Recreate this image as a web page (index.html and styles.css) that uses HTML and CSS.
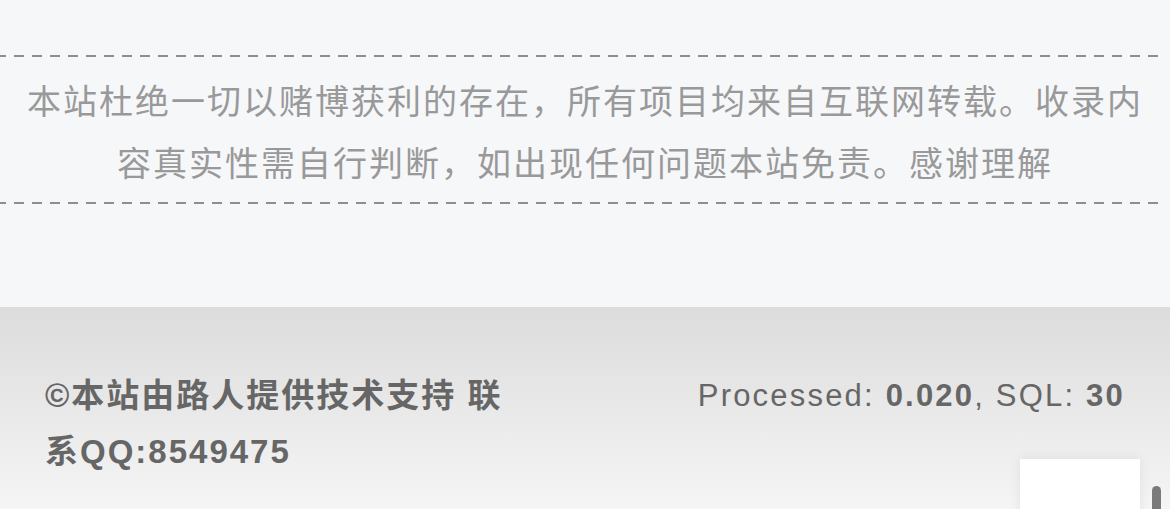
FILE: index.html
```html
<!DOCTYPE html>
<html lang="zh-CN">
<head>
  <meta charset="UTF-8" />
  <meta name="viewport" content="width=device-width, initial-scale=1.0"/>
  <title>Footer</title>
  <link rel="stylesheet" href="styles.css">
</head>
<body>

<div class="notice">
  <p>本站杜绝一切以赌博获利的存在，所有项目均来自互联网转载。收录内容真实性需自行判断，如出现任何问题本站免责。感谢理解</p>
</div>

<footer class="footer">
  <div class="footer-left">©本站由路人提供技术支持 联系QQ:8549475</div>
  <div class="footer-right">Processed: <b>0.020</b>, SQL: <b>30</b></div>
</footer>

<div class="back-top"></div>
<div class="scroll-thumb"></div>

</body>
</html>
```

FILE: styles.css
```css
body {
  margin: 0;
  background: #f6f7f9;
  font-family: "Liberation Sans", "Noto Sans CJK SC", sans-serif;
}

.notice {
  margin-top: 55px;
  margin-bottom: 103px;
  padding: 2px 24px;
  background-image:
    repeating-linear-gradient(to right, #8e8e8e 0 10px, transparent 10px 18px),
    repeating-linear-gradient(to right, #8e8e8e 0 10px, transparent 10px 18px);
  background-size: 100% 2px, 100% 2px;
  background-position: -4px 0, -4px 100%;
  background-repeat: no-repeat;
}

.notice p {
  margin: 0;
  padding: 14px 0 7px;
  text-align: center;
  font-size: 34px;
  line-height: 62px;
  letter-spacing: 2px;
  color: #999;
}

.footer {
  display: flex;
  align-items: flex-start;
  justify-content: space-between;
  padding: 61px 45px 60px 45px;
  background: linear-gradient(to bottom, #dcdcdc, #f9f9f9);
  color: #666;
  line-height: 56px;
}

.footer-left {
  width: 480px;
  font-size: 33px;
  font-weight: 700;
  letter-spacing: 2px;
}

.footer-right {
  font-size: 31px;
  letter-spacing: 2.2px;
  text-align: right;
}

.footer-right b {
  font-weight: 700;
}

.back-top {
  position: fixed;
  right: 30px;
  bottom: -40px;
  width: 120px;
  height: 90px;
  background: #fff;
  box-shadow: 0 0 12px rgba(0, 0, 0, 0.08);
}

.scroll-thumb {
  position: fixed;
  right: 9px;
  top: 486px;
  width: 9px;
  height: 40px;
  border-radius: 5px;
  background: #7a7a7a;
}
```
